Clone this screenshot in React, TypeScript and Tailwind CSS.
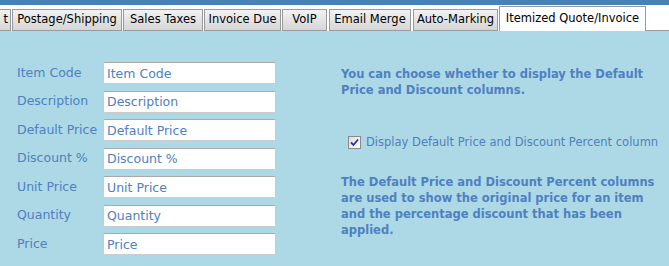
import { useState } from 'react'

const tabs = [
  { label: 'Postage/Shipping', w: 'w-[110px] mr-[1px]' },
  { label: 'Sales Taxes', w: 'w-[80px] mr-[1px]' },
  { label: 'Invoice Due', w: 'w-[77px] mr-[1px]' },
  { label: 'VoIP', w: 'w-[45px] mr-[2px]' },
  { label: 'Email Merge', w: 'w-[82px] mr-[2px]' },
  { label: 'Auto-Marking', w: 'w-[85px] mr-[1px]' },
]

const fields = ['Item Code', 'Description', 'Default Price', 'Discount %', 'Unit Price', 'Quantity', 'Price']

export default function App() {
  const [showColumns, setShowColumns] = useState(true)

  return (
    <div className="w-[669px] h-[266px] overflow-hidden bg-[#add8e6] font-['DejaVu_Sans',sans-serif] text-[12px]">
      <div className="h-[5px] bg-[#4682b4]" />

      {/* tab strip */}
      <div className="h-[26px] bg-white flex items-end">
        <div className="shrink-0 h-[22px] w-[11px] mr-[1px] border border-l-0 border-[#9a9a9a] bg-gradient-to-b from-[#f2f2f2] to-[#d6d6d6] flex items-center justify-end overflow-hidden text-[11.5px]">
          <span className="text-black pr-[2px]">t</span>
        </div>
        {tabs.map(t => (
          <div
            key={t.label}
            className={`shrink-0 h-[22px] ${t.w} border border-[#9a9a9a] bg-gradient-to-b from-[#f2f2f2] to-[#d6d6d6] flex items-center justify-center text-black whitespace-nowrap text-[11.5px]`}
          >
            {t.label}
          </div>
        ))}
        <div className="shrink-0 w-[147px] h-[25px] border border-b-0 border-[#9a9a9a] bg-white flex items-center justify-center text-black whitespace-nowrap text-[11.5px]">
          Itemized Quote/Invoice
        </div>
        <div className="flex-1 h-[1px] bg-[#9a9a9a]" />
      </div>

      <div className="flex">
        {/* fields */}
        <div className="w-[341px] shrink-0 pl-[17px] pt-[31px] flex flex-col gap-[6.5px]">
          {fields.map(f => (
            <div key={f} className="flex items-center h-[22px]">
              <span className="w-[86px] text-[#4f80c0] whitespace-nowrap text-[12.5px]">{f}</span>
              <input
                defaultValue={f}
                className="w-[173px] h-[22px] bg-white border border-[#cbcbcb] border-t-[#a9a9a9] rounded-[2px] px-[3px] text-[#4f80c0] outline-none font-['DejaVu_Sans',sans-serif] text-[12.5px]"
              />
            </div>
          ))}
        </div>

        {/* notes */}
        <div className="w-[328px] shrink-0 pt-[35px] text-[#4f80c0]">
          <p className="font-bold leading-[16px] whitespace-nowrap text-[11.5px]">
            You can choose whether to display the Default
            <br />
            Price and Discount columns.
          </p>
          <label className="flex items-center mt-[36px] ml-[7px] gap-[5px] whitespace-nowrap text-[11.5px] cursor-pointer">
            <span className="w-[13px] h-[13px] border border-[#8a8a8a] bg-gradient-to-br from-[#dcdcdc] to-white flex items-center justify-center">
              {showColumns && (
                <svg width="9" height="9" viewBox="0 0 9 9">
                  <path d="M1 4.5 L3.5 7 L8 1.5" fill="none" stroke="#24379a" strokeWidth="1.8" />
                </svg>
              )}
            </span>
            <input
              type="checkbox"
              className="sr-only"
              checked={showColumns}
              onChange={() => setShowColumns(!showColumns)}
            />
            Display Default Price and Discount Percent column
          </label>
          <p className="font-bold leading-[16px] mt-[23px] whitespace-nowrap text-[11.5px]">
            The Default Price and Discount Percent columns
            <br />
            are used to show the original price for an item
            <br />
            and the percentage discount that has been
            <br />
            applied.
          </p>
        </div>
      </div>
    </div>
  )
}
